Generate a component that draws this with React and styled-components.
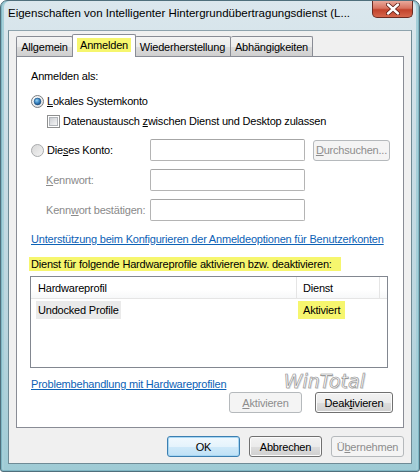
import React from 'react';
import styled, { createGlobalStyle } from 'styled-components';

const GlobalStyle = createGlobalStyle`
  html, body {
    margin: 0;
    padding: 0;
    background: #ffffff;
  }
  body {
    font-family: "Liberation Sans", Arial, sans-serif;
    font-size: 11px;
    letter-spacing: -0.2px;
    color: #000;
  }
`;

const Window = styled.div`
  width: 420px;
  height: 472px;
  box-sizing: border-box;
  display: flex;
  flex-direction: column;
  border: 1px solid #4f6f7c;
  border-radius: 7px 7px 3px 3px;
  background: linear-gradient(to bottom, #dbe7ed 0%, #cadde5 30%, #b9d5de 70%, #9fcbd5 100%);
  box-shadow: inset 1px 0 0 #7fb6c3, inset -1px 0 0 #7fb6c3, inset 0 -1px 0 #7fb6c3,
    inset 3px 0 0 #a5cfd9, inset -3px 0 0 #a5cfd9;
  overflow: hidden;
`;

const TitleBar = styled.div`
  height: 29px;
  display: flex;
  align-items: flex-start;
  padding-left: 7px;
`;

const Title = styled.div`
  flex: 1;
  padding-top: 6px;
  font-size: 11.5px;
  letter-spacing: 0;
  white-space: nowrap;
  overflow: hidden;
`;

const CloseButton = styled.div`
  width: 41px;
  height: 17px;
  margin-right: 6px;
  box-sizing: border-box;
  border: 1px solid #6b2b22;
  border-top: none;
  border-radius: 0 0 5px 5px;
  background: linear-gradient(to bottom, #e9a99b 0%, #d8735f 45%, #c2432c 55%, #d6664c 100%);
  display: flex;
  align-items: center;
  justify-content: center;
`;

const Client = styled.div`
  margin: 0 7px 7px 7px;
  flex: 1;
  display: flex;
  flex-direction: column;
  padding: 3px 7px 0 7px;
  background: #f0f0f0;
  border: 1px solid #6f8b96;
  border-top-color: #8ea3ad;
`;

const TabStrip = styled.div`
  height: 23px;
  display: flex;
  align-items: flex-end;
  margin-bottom: -1px;
  position: relative;
  z-index: 1;
`;

const Tab = styled.div`
  width: ${p => p.w}px;
  height: ${p => (p.active ? 23 : 20)}px;
  margin-bottom: ${p => (p.active ? 0 : 1)}px;
  margin-left: ${p => (p.active ? -1 : 0)}px;
  margin-right: ${p => (p.active ? -1 : 0)}px;
  box-sizing: border-box;
  border: 1px solid #898c95;
  border-bottom: none;
  border-left-width: ${p => (p.first || p.active ? 1 : 0)}px;
  border-radius: 2px 2px 0 0;
  background: ${p => (p.active ? '#ffffff' : 'linear-gradient(to bottom, #f4f4f4 0%, #ebebeb 50%, #dddddd 51%, #cfcfcf 100%)')};
  display: flex;
  align-items: center;
  justify-content: center;
  padding-bottom: ${p => (p.active ? 3 : 0)}px;
  position: relative;
  z-index: ${p => (p.active ? 2 : 1)};
`;

const Marked = styled.span`
  background: #f6f66e;
  padding: ${p => p.pad || '1px 2px'};
  margin-left: ${p => p.ml || 0}px;
`;

const Panel = styled.div`
  background: #ffffff;
  border: 1px solid #898c95;
  padding: 11px 10px 14px 14px;
  display: flex;
  flex-direction: column;
`;

const Text = styled.div`
  height: 16px;
  line-height: 16px;
  white-space: nowrap;
  color: ${p => (p.muted ? '#8a8a8a' : '#000')};
  margin-top: ${p => p.mt || 0}px;
`;

const U = styled.span`
  text-decoration: underline;
`;

const OptionRow = styled.div`
  height: 16px;
  display: flex;
  align-items: center;
  gap: 3px;
  margin-top: ${p => p.mt || 0}px;
  margin-left: ${p => p.indent || 0}px;
  white-space: nowrap;
`;

const AccountGrid = styled.div`
  margin-top: 10px;
  display: grid;
  grid-template-columns: 119px 155px 77px;
  grid-template-rows: 22px 22px 22px;
  row-gap: 8px;
  align-items: center;
`;

const FieldLabel = styled.div`
  display: flex;
  align-items: center;
  gap: 3px;
  padding-left: ${p => p.indent || 0}px;
  color: ${p => (p.muted ? '#8a8a8a' : '#000')};
  white-space: nowrap;
`;

const TextBox = styled.div`
  height: 22px;
  box-sizing: border-box;
  border: 1px solid #b4b4b4;
  border-top-color: #a6a6a6;
  border-radius: 2px;
  background: #ffffff;
`;

const Button = styled.div`
  width: ${p => p.w}px;
  height: 21px;
  box-sizing: border-box;
  margin-left: ${p => p.ml || 0}px;
  display: flex;
  align-items: center;
  justify-content: center;
  border-radius: 3px;
  white-space: nowrap;
  color: ${p => (p.disabled ? '#8d8d8d' : '#000')};
  border: 1px solid ${p => (p.primary ? '#3c7fb1' : p.disabled ? '#b5b9bc' : '#707070')};
  background: ${p =>
    p.disabled
      ? '#f4f4f4'
      : p.primary
      ? 'linear-gradient(to bottom, #f1f9fe 0%, #e5f3fc 50%, #cfe9f9 51%, #bfe1f6 100%)'
      : 'linear-gradient(to bottom, #f2f2f2 0%, #ebebeb 50%, #dddddd 51%, #cfcfcf 100%)'};
  box-shadow: ${p => (p.primary ? 'inset 0 0 0 1px #a6d6f3' : p.disabled ? 'none' : 'inset 0 0 0 1px #fbfbfb')};
`;

const Link = styled.div`
  height: 16px;
  line-height: 16px;
  color: #0d62b6;
  text-decoration: underline;
  white-space: nowrap;
  margin-top: ${p => p.mt || 0}px;
`;

const ListView = styled.div`
  margin-top: 4px;
  margin-left: -1px;
  width: 358px;
  height: 92px;
  box-sizing: border-box;
  border: 1px solid #828790;
  background: #ffffff;
`;

const ListRow = styled.div`
  display: flex;
  height: ${p => (p.header ? 21 : 19)}px;
  border-bottom: ${p => (p.header ? '1px solid #e5e5e5' : 'none')};
  background: ${p => (p.header ? 'linear-gradient(to bottom, #ffffff 0%, #ffffff 60%, #f7f8f9 100%)' : 'transparent')};
  padding-top: ${p => (p.header ? 0 : 1)}px;
`;

const Cell = styled.div`
  width: ${p => p.w}px;
  box-sizing: border-box;
  display: flex;
  align-items: center;
  padding-left: ${p => p.pl || 0}px;
  border-right: ${p => (p.sep ? '1px solid #e5e5e5' : 'none')};
  white-space: nowrap;
`;

const Selection = styled.span`
  background: ${p => (p.mark ? '#f6f66e' : '#eaeaea')};
  line-height: 18px;
  padding: 0 ${p => p.px || 2}px;
`;

const FooterRow = styled.div`
  margin-top: 8px;
  height: 16px;
  display: flex;
  align-items: center;
`;

const Watermark = styled.div`
  margin-left: auto;
  margin-right: 28px;
  margin-top: -6px;
  font-family: "DejaVu Sans", "Liberation Sans", sans-serif;
  font-style: italic;
  font-size: 19px;
  letter-spacing: 0;
  line-height: 20px;
  color: #fafafa;
  -webkit-text-stroke: 0.6px #8a8a8a;
  text-shadow: 1px 1px 0 #dcdcdc;
`;

const ButtonRow = styled.div`
  display: flex;
  justify-content: flex-end;
  gap: ${p => p.gap}px;
  margin-top: ${p => p.mt || 0}px;
`;

const Radio = ({ checked }) => (
  <svg width="13" height="13" viewBox="0 0 13 13">
    <defs>
      <linearGradient id={checked ? 'rgOn' : 'rgOff'} x1="0" y1="0" x2="1" y2="1">
        <stop offset="0" stopColor={checked ? '#ffffff' : '#d6d6d6'} />
        <stop offset="1" stopColor={checked ? '#d8dbde' : '#f4f4f4'} />
      </linearGradient>
      <radialGradient id="dot" cx="0.4" cy="0.35" r="0.7">
        <stop offset="0" stopColor="#9bd4f2" />
        <stop offset="0.5" stopColor="#3d89c6" />
        <stop offset="1" stopColor="#14477c" />
      </radialGradient>
    </defs>
    <circle cx="6.5" cy="6.5" r="6" fill={`url(#${checked ? 'rgOn' : 'rgOff'})`} stroke={checked ? '#7a7d80' : '#a9abad'} />
    {checked && <circle cx="6.5" cy="6.5" r="3.4" fill="url(#dot)" stroke="#1b4d7e" strokeWidth="0.6" />}
  </svg>
);

const CheckBox = () => (
  <svg width="13" height="13" viewBox="0 0 13 13">
    <defs>
      <linearGradient id="cb" x1="0" y1="0" x2="1" y2="1">
        <stop offset="0" stopColor="#c9ccd1" />
        <stop offset="1" stopColor="#f7f7f7" />
      </linearGradient>
    </defs>
    <rect x="0.5" y="0.5" width="12" height="12" fill="#ffffff" stroke="#8e8f8f" />
    <rect x="2.5" y="2.5" width="8" height="8" fill="url(#cb)" stroke="#b0b4b9" />
  </svg>
);

const CloseGlyph = () => (
  <svg width="14" height="12" viewBox="0 0 14 12">
    <path d="M2 1.5 L12 10.5 M12 1.5 L2 10.5" stroke="#5a1a12" strokeWidth="4" strokeLinecap="round" />
    <path d="M2 1.5 L12 10.5 M12 1.5 L2 10.5" stroke="#ffffff" strokeWidth="2.4" strokeLinecap="round" />
  </svg>
);

export default function App() {
  return (
    <>
      <GlobalStyle />
      <Window>
        <TitleBar>
          <Title>Eigenschaften von Intelligenter Hintergrundübertragungsdienst (L...</Title>
          <CloseButton>
            <CloseGlyph />
          </CloseButton>
        </TitleBar>

        <Client>
          <TabStrip>
            <Tab w={57} first>Allgemein</Tab>
            <Tab w={64} active><Marked pad="1px 3px">Anmelden</Marked></Tab>
            <Tab w={96}>Wiederherstellung</Tab>
            <Tab w={82}>Abhängigkeiten</Tab>
          </TabStrip>

          <Panel>
            <Text>Anmelden als:</Text>

            <OptionRow mt={9}>
              <Radio checked />
              <span><U>L</U>okales Systemkonto</span>
            </OptionRow>

            <OptionRow mt={4} indent={16}>
              <CheckBox />
              <span>Datenaustausch <U>z</U>wischen Dienst und Desktop zulassen</span>
            </OptionRow>

            <AccountGrid>
              <FieldLabel>
                <Radio />
                <span>Die<U>s</U>es Konto:</span>
              </FieldLabel>
              <TextBox />
              <Button w={77} ml={8} disabled><U>D</U>urchsuchen...</Button>

              <FieldLabel indent={15} muted><span><U>K</U>ennwort:</span></FieldLabel>
              <TextBox />
              <div />

              <FieldLabel indent={15} muted><span>Kenn<U>w</U>ort bestätigen:</span></FieldLabel>
              <TextBox />
              <div />
            </AccountGrid>

            <Link mt={10}>Unterstützung beim Konfigurieren der Anmeldeoptionen für Benutzerkonten</Link>

            <Text mt={9}>
              <Marked pad="1px 9px 1px 2px" ml={-2}>Dienst für folgende Hardwareprofile aktivieren bzw. deaktivieren:</Marked>
            </Text>

            <ListView>
              <ListRow header>
                <Cell w={266} pl={7} sep>Hardwareprofil</Cell>
                <Cell w={83} pl={6} sep>Dienst</Cell>
              </ListRow>
              <ListRow>
                <Cell w={266} pl={5}><Selection>Undocked Profile</Selection></Cell>
                <Cell w={83} pl={1}><Selection mark px={5}>Aktiviert</Selection></Cell>
              </ListRow>
            </ListView>

            <FooterRow>
              <Link>Problembehandlung mit Hardwareprofilen</Link>
              <Watermark>WinTotal</Watermark>
            </FooterRow>

            <ButtonRow gap={13}>
              <Button w={73} disabled><U>A</U>ktivieren</Button>
              <Button w={78}>Deak<U>t</U>ivieren</Button>
            </ButtonRow>
          </Panel>

          <ButtonRow gap={9} mt={8}>
            <Button w={73} primary>OK</Button>
            <Button w={73}>Abbrechen</Button>
            <Button w={73} disabled>Ü<U>b</U>ernehmen</Button>
          </ButtonRow>
        </Client>
      </Window>
    </>
  );
}
